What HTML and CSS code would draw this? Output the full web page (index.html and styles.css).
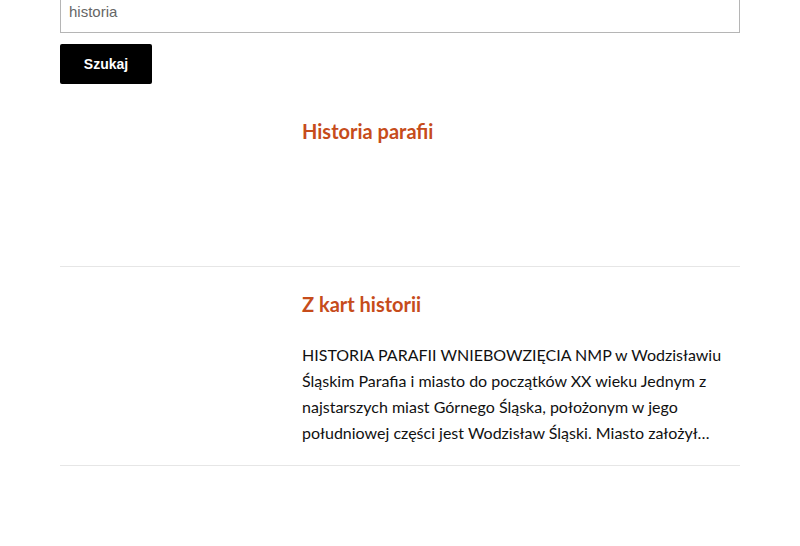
FILE: index.html
```html
<!DOCTYPE html>
<html lang="pl">
<head>
<meta charset="utf-8">
<link rel="stylesheet" href="styles.css">
</head>
<body>
<main class="page">
  <form class="search">
    <input class="search-input" type="text" value="historia">
    <button class="search-btn" type="button">Szukaj</button>
  </form>
  <article class="result result-first">
    <div class="thumb"></div>
    <div class="content">
      <h2 class="title">Historia parafii</h2>
    </div>
  </article>
  <article class="result">
    <div class="thumb"></div>
    <div class="content">
      <h2 class="title">Z kart historii</h2>
      <p class="excerpt">HISTORIA PARAFII WNIEBOWZIĘCIA NMP w Wodzisławiu Śląskim Parafia i miasto do początków XX wieku Jednym z najstarszych miast Górnego Śląska, położonym w jego południowej części jest Wodzisław Śląski. Miasto założył…</p>
    </div>
  </article>
</main>
</body>
</html>
```

FILE: styles.css
```css
html, body {
  margin: 0;
  padding: 0;
  background: #fff;
}
body {
  font-family: "Lato", "Liberation Sans", sans-serif;
  color: #111;
}
.page {
  width: 680px;
  margin: -11px auto 0;
}
.search {
  display: flex;
  flex-direction: column;
  align-items: flex-start;
  gap: 11px;
  margin: 0;
}
.search-input {
  box-sizing: border-box;
  width: 100%;
  height: 44px;
  border: 1px solid #b5b5b5;
  border-radius: 0;
  padding: 0 8px;
  font-family: "Liberation Sans", Arial, sans-serif;
  font-size: 15px;
  color: #666;
  background: #fff;
  outline: none;
}
.search-btn {
  width: 92px;
  height: 40px;
  border: 0;
  border-radius: 2px;
  background: #000;
  color: #fff;
  font-family: "Liberation Sans", Arial, sans-serif;
  font-weight: bold;
  font-size: 14px;
  padding: 0;
}
.result {
  display: grid;
  grid-template-columns: 220px 1fr;
  column-gap: 22px;
  padding: 20px 0 19px;
  border-bottom: 1px solid #e6e6e6;
}
.result-first {
  margin-top: 10px;
  min-height: 133px;
}
.title {
  margin: 0;
  font-size: 20px;
  line-height: 34px;
  font-weight: 700;
  color: #c64c1b;
}
.excerpt {
  margin: 21px 0 0;
  font-size: 16px;
  line-height: 26px;
  color: #111;
}
```
